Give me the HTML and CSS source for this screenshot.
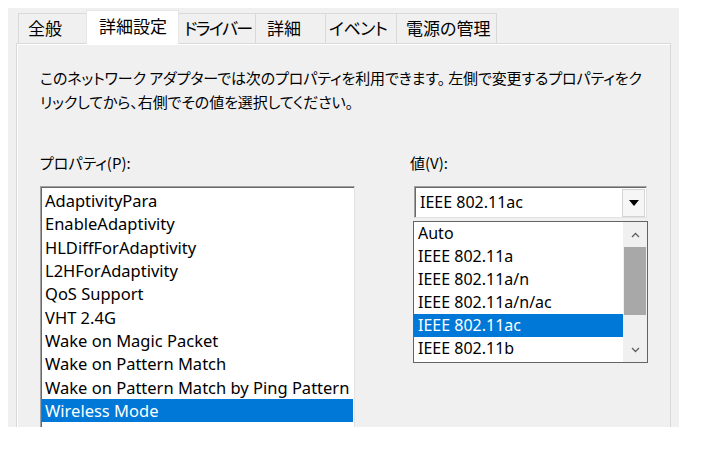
FILE: index.html
```html
<!DOCTYPE html>
<html lang="ja">
<head>
<meta charset="utf-8">
<title>詳細設定</title>
<link rel="stylesheet" href="styles.css">
</head>
<body>
<div class="window">
  <div class="tabs">
    <div class="tab w1">全般</div>
    <div class="tab active w2">詳細設定</div>
    <div class="tab w3">ドライバー</div>
    <div class="tab w4">詳細</div>
    <div class="tab w5">イベント</div>
    <div class="tab w6">電源の管理</div>
  </div>
  <div class="page">
    <p class="desc">このネットワーク アダプターでは次のプロパティを利用できます。 左側で変更するプロパティをク<br>リックしてから、右側でその値を選択してください。</p>
    <div class="columns">
      <div class="col-left">
        <div class="label">プロパティ(P):</div>
        <ul class="listbox">
          <li>AdaptivityPara</li>
          <li>EnableAdaptivity</li>
          <li>HLDiffForAdaptivity</li>
          <li>L2HForAdaptivity</li>
          <li>QoS Support</li>
          <li>VHT 2.4G</li>
          <li>Wake on Magic Packet</li>
          <li>Wake on Pattern Match</li>
          <li>Wake on Pattern Match by Ping Pattern</li>
          <li class="selected">Wireless Mode</li>
        </ul>
      </div>
      <div class="col-right">
        <div class="label">値(V):</div>
        <div class="combo">
          <span class="combo-text">IEEE 802.11ac</span>
          <span class="combo-btn">
            <svg width="10" height="6" viewBox="0 0 10 6"><polygon points="0,0 10,0 5,6" fill="#000"/></svg>
          </span>
          <div class="dropdown">
            <ul class="options">
              <li>Auto</li>
              <li>IEEE 802.11a</li>
              <li>IEEE 802.11a/n</li>
              <li>IEEE 802.11a/n/ac</li>
              <li class="selected">IEEE 802.11ac</li>
              <li>IEEE 802.11b</li>
            </ul>
            <div class="scrollbar">
              <div class="sb-arrow">
                <svg width="9" height="6" viewBox="0 0 9 6"><polyline points="1,5 4.5,1.5 8,5" fill="none" stroke="#606060" stroke-width="1.3"/></svg>
              </div>
              <div class="sb-thumb"></div>
              <div class="sb-track"></div>
              <div class="sb-arrow">
                <svg width="9" height="6" viewBox="0 0 9 6"><polyline points="1,1 4.5,4.5 8,1" fill="none" stroke="#606060" stroke-width="1.3"/></svg>
              </div>
            </div>
          </div>
        </div>
      </div>
    </div>
  </div>
</div>
</body>
</html>
```
FILE: styles.css
```css
html, body {
  margin: 0;
  padding: 0;
  background: #ffffff;
}

body {
  font-family: "Noto Sans CJK JP", "Noto Sans", sans-serif;
  color: #000;
}

.window {
  margin: 8px 0 0 8px;
  width: 671px;
  height: 419px;
  background: #f0f0f0;
  overflow: hidden;
  display: flex;
  flex-direction: column;
}

.tabs {
  display: flex;
  align-items: flex-end;
  height: 35px;
  padding-left: 11px;
  flex: none;
}

.tab {
  box-sizing: border-box;
  height: 30px;
  padding: 0 0 2px 9px;
  display: flex;
  align-items: center;
  border: 1px solid #d9d9d9;
  border-bottom: none;
  margin-left: -1px;
  font-size: 17px;
  font-feature-settings: "palt";
  background: #f0f0f0;
  white-space: nowrap;
  overflow: hidden;
}

.tab.active {
  height: 34px;
  margin-bottom: -1px;
  padding-left: 12px;
  padding-bottom: 4px;
  background: #ffffff;
  border-color: #e6e6e6;
  position: relative;
  z-index: 1;
}

.w1 { width: 69px; }
.w2 { width: 93px; }
.w3 { width: 78px; padding-left: 5px; letter-spacing: -1.6px; }
.w4 { width: 71px; padding-left: 11px; }
.w5 { width: 72px; padding-left: 3px; letter-spacing: -0.5px; }
.w6 { width: 101px; }

.page {
  flex: 1;
  margin-left: 8px;
  width: 655px;
  box-sizing: border-box;
  border: 1px solid #d9d9d9;
  box-shadow: inset 1px 1px #ffffff;
  border-bottom: none;
  padding: 22px 0 0 23px;
}

.desc {
  margin: 0;
  font-size: 15px;
  line-height: 24px;
  font-feature-settings: "palt";
  white-space: nowrap;
  letter-spacing: -0.1px;
}

.columns {
  display: flex;
  margin-top: 37px;
}

.col-left {
  width: 315px;
}

.col-right {
  margin-left: 55px;
}

.label {
  font-size: 15px;
  line-height: 24px;
  margin-bottom: 11px;
  font-feature-settings: "palt";
}

.listbox {
  list-style: none;
  margin: 0;
  padding: 2px 1px 0 1px;
  box-sizing: border-box;
  width: 315px;
  height: 260px;
  background: #ffffff;
  border: 1px solid;
  border-color: #a0a0a0 #e3e3e3 #e3e3e3 #a0a0a0;
  box-shadow: inset 1px 1px #696969;
  font-family: "Noto Sans", sans-serif;
  font-size: 16.5px;
}

.listbox li {
  height: 23.33px;
  line-height: 23.33px;
  padding-left: 3px;
  white-space: nowrap;
}

.listbox li.selected,
.options li.selected {
  background: #0078d7;
  color: #ffffff;
}

.combo {
  position: relative;
  box-sizing: border-box;
  width: 233px;
  height: 32px;
  margin-left: 4px;
  background: #ffffff;
  border: 1px solid;
  border-color: #a0a0a0 #e3e3e3 #e3e3e3 #a0a0a0;
  box-shadow: inset 1px 1px #696969;
  display: flex;
  align-items: center;
  font-family: "Noto Sans", sans-serif;
  font-size: 16px;
}

.combo-text {
  flex: 1;
  padding-left: 5px;
}

.combo-btn {
  box-sizing: border-box;
  width: 23px;
  height: 28px;
  margin: 2px 1px 0 0;
  background: #f6f6f6;
  border: 1px solid #d4d4d4;
  display: flex;
  align-items: center;
  justify-content: center;
}

.dropdown {
  position: absolute;
  left: -2px;
  top: 34px;
  width: 235px;
  height: 142px;
  box-sizing: border-box;
  background: #ffffff;
  border: 1px solid #646464;
  display: flex;
  z-index: 2;
}

.options {
  list-style: none;
  margin: 0;
  padding: 0;
  flex: 1;
}

.options li {
  height: 23px;
  line-height: 23px;
  padding-left: 4px;
  white-space: nowrap;
}

.scrollbar {
  width: 24px;
  background: #f0f0f0;
  display: flex;
  flex-direction: column;
}

.sb-arrow {
  height: 25px;
  display: flex;
  align-items: center;
  justify-content: center;
}

.sb-thumb {
  height: 68px;
  margin: 0 1px;
  background: #a8a8a8;
}

.sb-track {
  flex: 1;
}
```
